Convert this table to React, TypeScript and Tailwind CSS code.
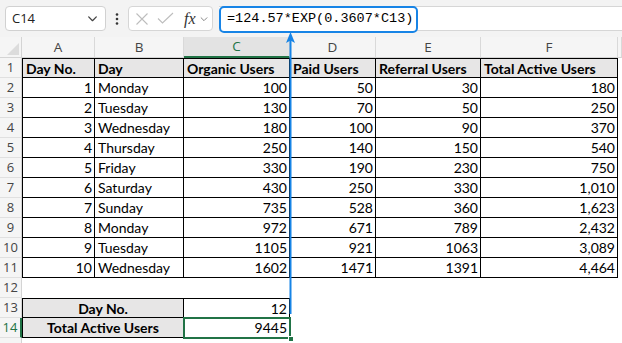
import React from "react";

type Row = (string | number)[];

const data: Row[] = [
  [1, "Monday", 100, 50, 30, "180"],
  [2, "Tuesday", 130, 70, 50, "250"],
  [3, "Wednesday", 180, 100, 90, "370"],
  [4, "Thursday", 250, 140, 150, "540"],
  [5, "Friday", 330, 190, 230, "750"],
  [6, "Saturday", 430, 250, 330, "1,010"],
  [7, "Sunday", 735, 528, 360, "1,623"],
  [8, "Monday", 972, 671, 789, "2,432"],
  [9, "Tuesday", 1105, 921, 1063, "3,089"],
  [10, "Wednesday", 1602, 1471, 1391, "4,464"],
];

const headers = ["Day No.", "Day", "Organic Users", "Paid Users", "Referral Users", "Total Active Users"];

function RowHead({ n, active }: { n?: number; active?: boolean }) {
  return (
    <div
      className={
        "h-[20px] flex items-center justify-center bg-[#f5f5f5] border-b border-[#e0e0e0] font-['Open_Sans'] text-[13px] " +
        (active ? "text-[#217346] border-r-2 border-r-[#217346] bg-[#e3e3e3]" : "text-[#444] border-r border-r-[#d4d4d4]")
      }
    >
      {n}
    </div>
  );
}

function Chevron({ size = 12, color = "#555" }: { size?: number; color?: string }) {
  return (
    <svg width={size} height={size} viewBox="0 0 12 12" fill="none">
      <path d="M2.5 4.5 L6 8 L9.5 4.5" stroke={color} strokeWidth="1.2" strokeLinecap="round" strokeLinejoin="round" />
    </svg>
  );
}

export default function App() {
  const cell = "h-[20px] flex items-center px-[2px] text-[14px] text-black whitespace-nowrap overflow-hidden";
  return (
    <div className="relative w-[622px] h-[343px] overflow-hidden bg-white font-['Lato']">
      {/* Toolbar */}
      <div className="h-[37px] bg-[#f3f3f3] flex items-start pt-[6px] pl-[5px]">
        <div className="w-[101px] h-[25px] bg-white border border-[#d1d1d1] rounded-[4px] flex items-center justify-between pl-[6px] pr-[6px]">
          <span className="font-['Open_Sans'] text-[13px] text-[#222]">C14</span>
          <Chevron size={13} color="#444" />
        </div>
        <div className="w-[22px] h-[25px] flex items-center justify-center">
          <svg width="4" height="14" viewBox="0 0 4 14">
            <circle cx="2" cy="2.5" r="1.3" fill="#333" />
            <circle cx="2" cy="7" r="1.3" fill="#333" />
            <circle cx="2" cy="11.5" r="1.3" fill="#333" />
          </svg>
        </div>
        <div className="w-[85px] h-[25px] bg-white border border-[#d6d6d6] rounded-[4px] flex items-center pl-[5px]">
          <svg width="14" height="14" viewBox="0 0 14 14" className="ml-[1px]">
            <path d="M1.5 1.5 L12.5 12.5 M12.5 1.5 L1.5 12.5" stroke="#bdbdbd" strokeWidth="1.1" />
          </svg>
          <svg width="17" height="13" viewBox="0 0 17 13" className="ml-[8px]">
            <path d="M1 6.5 L5.5 11 L16 1" stroke="#bdbdbd" strokeWidth="1.1" fill="none" />
          </svg>
          <span className="ml-[10px] font-['Liberation_Serif'] italic text-[16px] text-[#333] leading-none">fx</span>
          <span className="ml-[3px]">
            <Chevron size={10} color="#888" />
          </span>
        </div>
        <div className="ml-[6px] flex-1 h-[25px] bg-white border-y border-[#d6d6d6] relative">
          <div className="absolute left-0 top-[-1px] w-[199px] h-[27px] border-2 border-[#1784e6] rounded-[5px] bg-white flex items-center pl-[6px]">
            <span className="font-['Liberation_Mono'] text-[13.5px] text-black">=124.57*EXP(0.3607*C13)</span>
          </div>
        </div>
      </div>

      {/* Grid */}
      <div className="grid grid-cols-[22px_73px_89px_106px_86px_105px_137px_1fr]">
        {/* Column header */}
        <div className="h-[21px] bg-[#f5f5f5] border-r border-b border-[#d4d4d4] relative">
          <div className="absolute right-[2px] bottom-[2px] w-0 h-0 border-l-[12px] border-l-transparent border-b-[12px] border-b-[#dcdcdc]" />
        </div>
        {["A", "B", "C", "D", "E", "F", "G"].map((c) => (
          <div
            key={c}
            className={
              "h-[21px] flex items-center justify-center font-['Open_Sans'] text-[13.5px] border-r border-[#d9d9d9] " +
              (c === "C"
                ? "bg-[#e3e3e3] text-[#217346] border-b-2 border-b-[#217346]"
                : "bg-[#f5f5f5] text-[#444] border-b border-b-[#d4d4d4]")
            }
          >
            {c === "G" ? "" : c}
          </div>
        ))}

        {/* Row 1 */}
        <RowHead n={1} />
        {headers.map((h, i) => (
          <div
            key={h}
            className={
              cell +
              " bg-[#e7e6e6] font-bold border-t border-r border-b border-black pl-[3px] " +
              (i === 0 ? "border-l" : "")
            }
          >
            {h}
          </div>
        ))}
        <div className="h-[20px]" />

        {/* Data rows */}
        {data.map((r, ri) => (
          <React.Fragment key={ri}>
            <RowHead n={ri + 2} />
            {r.map((v, ci) => (
              <div
                key={ci}
                className={
                  cell +
                  " border-r border-b border-black " +
                  (ci === 0 ? "border-l " : "") +
                  (ci === 1 ? "justify-start pl-[3px]" : "justify-end")
                }
              >
                {v}
              </div>
            ))}
            <div className="h-[20px]" />
          </React.Fragment>
        ))}

        {/* Row 12 */}
        <RowHead n={12} />
        <div className="col-span-7 h-[20px]" />

        {/* Row 13 */}
        <RowHead n={13} />
        <div className={cell + " col-span-2 justify-center bg-[#e7e6e6] font-bold border border-black border-r"}>Day No.</div>
        <div className={cell + " justify-end border-t border-r border-b border-black"}>12</div>
        <div className="col-span-4 h-[20px]" />

        {/* Row 14 */}
        <RowHead n={14} active />
        <div className={cell + " col-span-2 justify-center bg-[#e7e6e6] font-bold border-l border-r border-b border-black"}>Total Active Users</div>
        <div className={cell + " justify-end border-r border-b border-black"}>9445</div>
        <div className="col-span-4 h-[20px]" />

        <RowHead />
        <div className="col-span-7 h-[20px]" />
      </div>

      {/* Selection C14 */}
      <div className="absolute left-[183px] top-[317px] w-[108px] h-[22px] border-2 border-[#217346] pointer-events-none" />
      <div className="absolute left-[288px] top-[336px] w-[6px] h-[6px] bg-[#217346] border border-white" />

      {/* Blue arrow */}
      <svg className="absolute left-[285px] top-[32px]" width="11" height="282" viewBox="0 0 11 282">
        <path d="M5.5 0 L10 11 L5.5 8.5 L1 11 Z" fill="#1784e6" />
        <rect x="4.5" y="6" width="2" height="276" fill="#1784e6" />
      </svg>
    </div>
  );
}
